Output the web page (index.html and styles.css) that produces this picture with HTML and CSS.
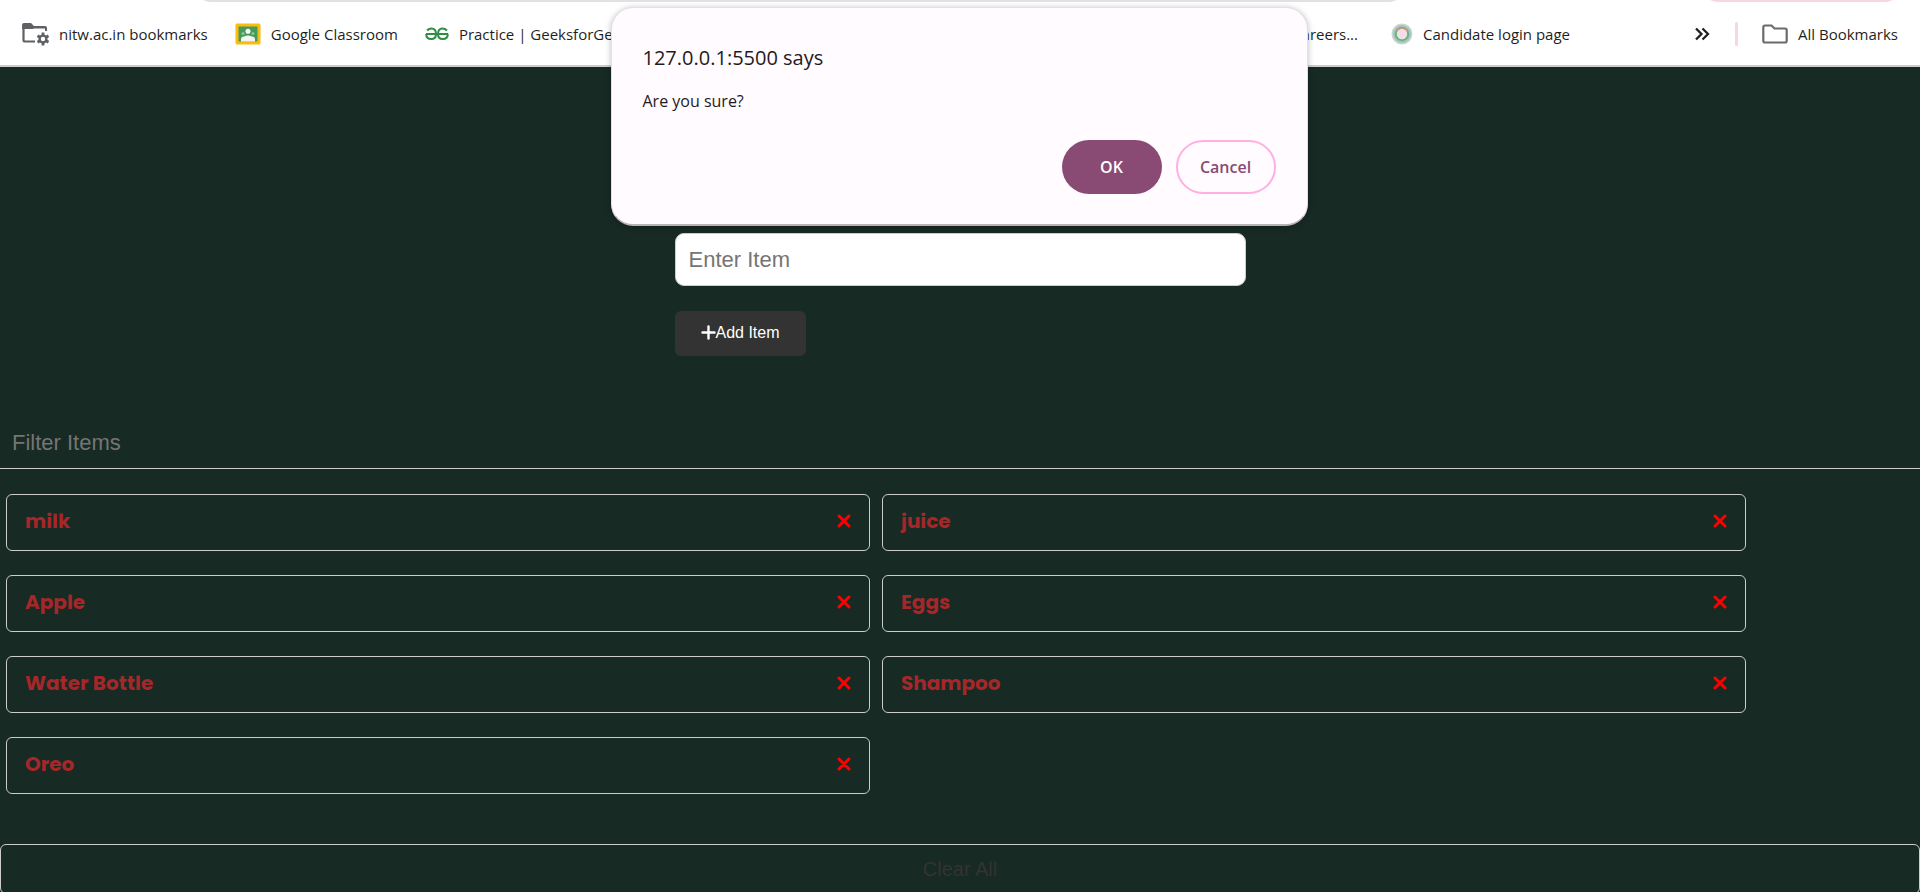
FILE: index.html
```html
<!DOCTYPE html>
<html lang="en">
<head>
<meta charset="utf-8">
<meta name="viewport" content="width=device-width, initial-scale=1">
<title>Shopping List</title>
<link rel="stylesheet" href="styles.css">
</head>
<body>
<header class="browser">
  <div class="toolbar"><span class="address-pill"></span><span class="profile-pill"></span></div>
  <nav class="bookmarks" aria-label="Bookmarks">
    <div class="bookmark-group">
      <a class="bookmark" href="#">
        <svg width="28" height="24" viewBox="0 0 28 24" aria-hidden="true"><path d="M14 19.500H4q-1.500 0-1.500-1.500V5" fill="none" stroke="#5f6164" stroke-width="2.200"/><path d="M1 7V3q0-2 2-2h7l3 3h11q2 0 2 2v3h-2V6.500H13L12 7z" fill="#5f6164"/><circle cx="22" cy="17" r="3.400" fill="none" stroke="#5f6164" stroke-width="2.400"/><path d="M22 10.500v3M22 20.500v3M16.500 13.800l2.500 1.500M25 18.700l2.500 1.500M16.500 20.200l2.500-1.500M25 15.300l2.500-1.500" stroke="#5f6164" stroke-width="2.800"/></svg>
        <span>nitw.ac.in bookmarks</span>
      </a>
      <a class="bookmark" href="#">
        <svg width="26" height="22" viewBox="0 0 26 22" aria-hidden="true"><rect x="0.500" y="0.500" width="25" height="21" rx="1.500" fill="#fbbc12"/><rect x="3.500" y="3.500" width="19" height="15" fill="#449c58"/><circle cx="13" cy="8.300" r="2.500" fill="#fff"/><circle cx="8" cy="10.500" r="1.500" fill="#8cc79a"/><circle cx="18" cy="10.500" r="1.500" fill="#8cc79a"/><path d="M6 18.500v-2q0-3 3-3 4-2 8 0 3 0 3 3v2z" fill="#f3f5f3"/></svg>
        <span>Google Classroom</span>
      </a>
      <a class="bookmark" href="#">
        <svg width="24" height="14" viewBox="0 0 24 14" fill="none" stroke="#2f8d46" stroke-width="2" aria-hidden="true"><path d="M1 7h22M2 3.500Q4 1.500 6.500 1.500c3 0 4.500 2.500 4.500 5.500s-1.500 5-4.700 5C3 12 1.200 10 1.200 7M22 3.500q-2-2-4.500-2c-3 0-4.500 2.500-4.500 5.500s1.500 5 4.700 5c3.300 0 5.100-2 5.100-5"/></svg>
        <span>Practice | GeeksforGeeks</span>
      </a>
    </div>
    <div class="bookmark-group bookmark-group-end">
      <a class="bookmark" href="#"><span>Careers...</span></a>
      <a class="bookmark" href="#">
        <svg width="22" height="22" viewBox="0 0 22 22" aria-hidden="true"><circle cx="11" cy="11" r="9.700" fill="#9cc4cf" stroke="#cbd6c5" stroke-width="1.500"/><circle cx="11" cy="11" r="6.200" fill="#e8ead8" stroke="#70b27d" stroke-width="2"/><path d="M5.500 8.500a6 6 0 0 1 11 0" fill="none" stroke="#c79a72" stroke-width="1.500"/><path d="M7.500 7h7v4.500q-1 3.500-3.500 3.500t-3.500-3.500z" fill="#f6d9ec"/></svg>
        <span>Candidate login page</span>
      </a>
      <button class="more" type="button" aria-label="More bookmarks"><svg width="16" height="14" viewBox="0 0 16 14" fill="none" stroke="#202124" stroke-width="2.300" aria-hidden="true"><path d="M2 1.500L7.500 7 2 12.500M8.500 1.500L14 7l-5.500 5.500"/></svg></button>
      <span class="divider"></span>
      <a class="bookmark all" href="#">
        <svg width="26" height="20" viewBox="0 0 26 20" fill="none" stroke="#6b6b6e" stroke-width="2.200" aria-hidden="true"><path d="M3 1.500h6.500l3 3H23q1.700 0 1.700 1.700v10.600q0 1.700-1.700 1.700H3q-1.700 0-1.700-1.700V3.200Q1.300 1.500 3 1.500z"/></svg>
        <span>All Bookmarks</span>
      </a>
    </div>
  </nav>
</header>

<main class="page">
  <form class="item-form">
    <input class="item-input" type="text" placeholder="Enter Item" aria-label="Enter Item">
    <button class="add-button" type="button"><svg width="15" height="15" viewBox="0 0 15 15" aria-hidden="true"><path d="M7.500 1.500v12M1.500 7.500h12" stroke="#fff" stroke-width="2.400" stroke-linecap="round"/></svg>Add Item</button>
  </form>
  <input class="filter" type="text" placeholder="Filter Items" aria-label="Filter Items">
  <ul class="items">
    <li class="item">milk<button class="remove" type="button" aria-label="Remove milk"><svg width="14" height="14" viewBox="0 0 14 14" aria-hidden="true"><path d="M2 2l10 10M12 2L2 12"/></svg></button></li>
    <li class="item">juice<button class="remove" type="button" aria-label="Remove juice"><svg width="14" height="14" viewBox="0 0 14 14" aria-hidden="true"><path d="M2 2l10 10M12 2L2 12"/></svg></button></li>
    <li class="item">Apple<button class="remove" type="button" aria-label="Remove Apple"><svg width="14" height="14" viewBox="0 0 14 14" aria-hidden="true"><path d="M2 2l10 10M12 2L2 12"/></svg></button></li>
    <li class="item">Eggs<button class="remove" type="button" aria-label="Remove Eggs"><svg width="14" height="14" viewBox="0 0 14 14" aria-hidden="true"><path d="M2 2l10 10M12 2L2 12"/></svg></button></li>
    <li class="item">Water Bottle<button class="remove" type="button" aria-label="Remove Water Bottle"><svg width="14" height="14" viewBox="0 0 14 14" aria-hidden="true"><path d="M2 2l10 10M12 2L2 12"/></svg></button></li>
    <li class="item">Shampoo<button class="remove" type="button" aria-label="Remove Shampoo"><svg width="14" height="14" viewBox="0 0 14 14" aria-hidden="true"><path d="M2 2l10 10M12 2L2 12"/></svg></button></li>
    <li class="item">Oreo<button class="remove" type="button" aria-label="Remove Oreo"><svg width="14" height="14" viewBox="0 0 14 14" aria-hidden="true"><path d="M2 2l10 10M12 2L2 12"/></svg></button></li>
  </ul>
  <button class="clear" type="button">Clear All</button>
</main>

<dialog class="confirm" open aria-labelledby="confirm-title">
  <h1 class="confirm-title" id="confirm-title">127.0.0.1:5500 says</h1>
  <p class="confirm-text">Are you sure?</p>
  <div class="confirm-actions">
    <button class="confirm-button ok" type="button">OK</button>
    <button class="confirm-button cancel" type="button">Cancel</button>
  </div>
</dialog>
</body>
</html>
```

FILE: styles.css
```css
* { box-sizing: border-box; }

body {
  margin: 0;
  min-height: 100vh;
  overflow: hidden;
  background: #172a23;
  font-family: "Segoe UI", "Open Sans", sans-serif;
}

button, input { font-family: Arial, "Liberation Sans", sans-serif; }
svg { flex: none; display: block; }

.browser { background: #fff; border-bottom: 2px solid #cbcdcc; }

.toolbar {
  display: flex;
  align-items: flex-end;
  justify-content: space-between;
  height: 2px;
  padding: 0 16px 0 192px;
  overflow: hidden;
}
.address-pill, .profile-pill { height: 40px; border-radius: 20px; }
.address-pill { flex: 0 0 71%; background: #e1e1e1; }
.profile-pill { flex: 0 0 12%; background: #f8d4e5; }

.bookmarks {
  display: flex;
  align-items: center;
  justify-content: space-between;
  height: 63px;
  padding: 0 22px 0 21px;
}
.bookmark-group { display: flex; align-items: center; gap: 27px; }
.bookmark-group-end { gap: 33px; }
.bookmark {
  display: flex;
  align-items: center;
  gap: 10px;
  color: #1f1f1f;
  font-size: 15px;
  line-height: 20px;
  text-decoration: none;
  white-space: nowrap;
}
.more {
  display: flex;
  margin: 0 -8px 0 91px;
  padding: 0;
  border: 0;
  background: none;
}
.divider { width: 3px; height: 24px; border-radius: 2px; background: #f8d4e5; }
.all { margin-left: -9px; }

.page { display: flex; flex-direction: column; padding-top: 166px; }

.item-form {
  display: flex;
  flex-direction: column;
  align-items: flex-start;
  gap: 25px;
  width: 571px;
  max-width: 100%;
  margin: 0 auto 60px;
}
.item-input {
  width: 100%;
  height: 53px;
  padding: 0 13px;
  border: 1px solid #ccc;
  border-radius: 9px;
  background: #fff;
  font-size: 22px;
}
.item-input::placeholder, .filter::placeholder { color: #757575; }
.add-button {
  display: flex;
  align-items: center;
  height: 45px;
  padding: 0 26px 2px;
  border: 0;
  border-radius: 6px;
  background: #333;
  color: #fff;
  font-size: 16px;
}

.filter {
  width: 100%;
  height: 53px;
  padding: 2px 12px 0;
  border: 0;
  border-bottom: 1px solid #ccc;
  background: transparent;
  font-size: 22px;
}

.items {
  display: grid;
  grid-template-columns: repeat(2, calc(45% + 12px));
  row-gap: 24px;
  margin: 25px 0 50px;
  padding: 0;
  list-style: none;
}
.item {
  display: flex;
  align-items: center;
  justify-content: space-between;
  height: 57px;
  margin: 0 6px;
  padding: 0 18px 3px;
  border: 1px solid #ccc;
  border-radius: 6px;
  color: #a52729;
  font-family: Poppins, Inter, sans-serif;
  font-size: 20px;
  font-weight: 700;
}
.remove { padding: 0; border: 0; background: none; }
.remove path { fill: none; stroke: #f00; stroke-width: 3; stroke-linecap: round; }

.clear {
  height: 50px;
  padding: 0;
  border: 1px solid #ccc;
  border-radius: 6px;
  background: transparent;
  color: #333;
  font-size: 20px;
}

.confirm {
  position: absolute;
  top: 7px;
  right: 2px;
  left: 0;
  width: 697px;
  margin: 0 auto;
  padding: 36px 31px 30px;
  border: 1px solid #eadbe4;
  border-bottom: 2px solid #b9b1b8;
  border-radius: 22px;
  background: #fffbff;
  color: #1f1a1d;
  box-shadow: 0 1px 6px rgba(0, 0, 0, 0.25);
}
.confirm-title { margin: 0; font-size: 20px; font-weight: 500; line-height: 28px; }
.confirm-text { margin: 17px 0 27px; font-size: 16px; line-height: 24px; }
.confirm-actions { display: flex; justify-content: flex-end; gap: 14px; }
.confirm-button {
  width: 100px;
  height: 54px;
  border-radius: 27px;
  font-family: "Segoe UI", "Open Sans", sans-serif;
  font-size: 16px;
  font-weight: 600;
}
.ok { border: 0; background: #894b74; color: #fff; }
.cancel { border: 2px solid #ffafe0; background: transparent; color: #894b74; }
```
